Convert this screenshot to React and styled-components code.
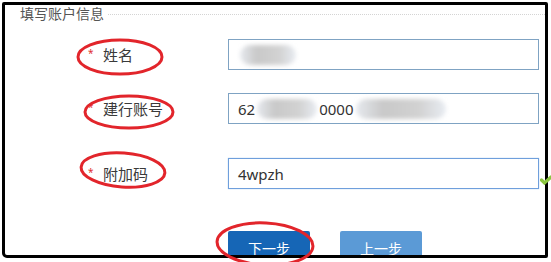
import React from 'react';
import styled, { createGlobalStyle } from 'styled-components';

const GlobalStyle = createGlobalStyle`
  html, body {
    margin: 0;
    padding: 0;
    background: #fff;
  }
  body {
    font-family: "Noto Sans", "Noto Sans CJK SC", sans-serif;
  }
`;

const rows = [
  { label: '姓名', gap: 16, value: [{ blur: 56 }] },
  {
    label: '建行账号',
    gap: 23,
    value: ['62', { blur: 60 }, '0000', { blur: 90 }],
  },
  { label: '附加码', gap: 34, value: ['4wpzh'], focus: true },
];

const App = () => {
  return (
    <Page>
      <GlobalStyle />
      <Frame>
        <Legend>
          <LegendText>填写账户信息</LegendText>
          <LegendLine />
        </Legend>
        {rows.map((row) => (
          <Row key={row.label} $gap={row.gap}>
            <Label>
              <Star>*</Star>
              {row.label}
            </Label>
            <Field $focus={row.focus}>
              {row.value.map((v, i) =>
                typeof v === 'string' ? (
                  <span key={i}>{v}</span>
                ) : (
                  <Smudge key={i} style={{ width: v.blur }} />
                )
              )}
            </Field>
          </Row>
        ))}
        <Actions>
          <Button $primary>下一步</Button>
          <Button>上一步</Button>
        </Actions>
      </Frame>
      <Check viewBox="0 0 12 10">
        <path d="M1.5 5 L4.5 8 L11 2" fill="none" stroke="#8cc63f" strokeWidth="3.2" strokeLinecap="round" />
      </Check>
      <Marks viewBox="0 0 551 262">
        <ellipse cx="120" cy="57" rx="42" ry="17" />
        <ellipse cx="129" cy="112" rx="44" ry="16" />
        <ellipse cx="123" cy="170" rx="42" ry="17" transform="rotate(4 123 170)" />
        <ellipse cx="265" cy="244" rx="48" ry="21" transform="rotate(3 265 244)" />
      </Marks>
    </Page>
  );
};

const Page = styled.div`
  position: relative;
  width: 551px;
  height: 262px;
  padding: 2px 3px 4px 2px;
  box-sizing: border-box;
  overflow: hidden;
`;

const Frame = styled.div`
  height: 100%;
  box-sizing: border-box;
  border: 3px solid #000;
  border-radius: 2px 2px 2px 5px;
  overflow: hidden;
  background: #fff;
`;

const Legend = styled.div`
  display: flex;
  align-items: center;
  padding-left: 15px;
  height: 19px;
  margin-top: -1px;
`;

const LegendText = styled.span`
  font-size: 14px;
  color: #555;
  line-height: 19px;
`;

const LegendLine = styled.div`
  flex: 1;
  margin-left: 4px;
  margin-top: 1px;
  border-top: 1px dotted #d4d4d4;
`;

const Row = styled.div`
  display: flex;
  align-items: center;
  margin-top: ${(p) => p.$gap}px;
`;

const Label = styled.div`
  width: 223px;
  box-sizing: border-box;
  padding-left: 83px;
  font-size: 15px;
  color: #3a3a3a;
  display: flex;
  align-items: center;
`;

const Star = styled.span`
  color: #e03030;
  font-size: 10px;
  width: 15px;
  margin-top: -4px;
`;

const Field = styled.div`
  width: 311px;
  height: 31px;
  box-sizing: border-box;
  border: 1px solid ${(p) => (p.$focus ? '#6f9fdc' : '#7fa3c3')};
  box-shadow: ${(p) => (p.$focus ? '0 0 1px #9cc2ee' : 'none')};
  padding-left: 9px;
  display: flex;
  align-items: center;
  font-size: 15px;
  color: #333;
  overflow: hidden;
`;

const Smudge = styled.span`
  display: inline-block;
  height: 20px;
  margin: 0 2px;
  border-radius: 10px;
  background: linear-gradient(90deg, #e6e9ee, #c9c9c9 30%, #d2d2d2 70%, #e8ecf2);
  filter: blur(2px);
`;

const Actions = styled.div`
  display: flex;
  gap: 30px;
  margin-top: 42px;
  padding-left: 223px;
`;

const Button = styled.div`
  width: 82px;
  height: 32px;
  border-radius: 2px;
  background: ${(p) => (p.$primary ? '#1666b6' : '#5b9ad6')};
  color: #fff;
  font-size: 14px;
  display: flex;
  justify-content: center;
  padding-top: 7px;
  box-sizing: border-box;
`;

const Check = styled.svg`
  position: absolute;
  left: 540px;
  top: 175px;
  width: 12px;
  height: 10px;
`;

const Marks = styled.svg`
  position: absolute;
  left: 0;
  top: 0;
  width: 551px;
  height: 262px;
  pointer-events: none;
  fill: none;
  stroke: #e2252b;
  stroke-width: 3;
`;

export default App;
